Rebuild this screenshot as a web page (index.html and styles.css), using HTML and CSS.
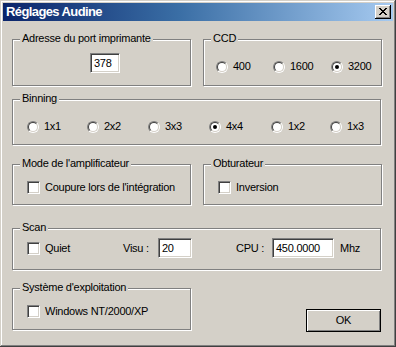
FILE: index.html
```html
<!DOCTYPE html>
<html lang="fr">
<head>
<meta charset="utf-8">
<title>Réglages Audine</title>
<link rel="stylesheet" href="styles.css">
</head>
<body>
<div class="dialog">
  <div class="titlebar">
    <span class="title">Réglages Audine</span>
    <span class="close"><svg width="8" height="7" viewBox="0 0 8 7"><path d="M0 0h2v1H0zM6 0h2v1H6zM1 1h2v1H1zM5 1h2v1H5zM2 2h4v1H2zM3 3h2v1H3zM2 4h4v1H2zM1 5h2v1H1zM5 5h2v1H5zM0 6h2v1H0zM6 6h2v1H6z" fill="#000"/></svg></span>
  </div>
  <div class="content">
    <div class="row row1">
      <div class="group half addr">
        <span class="legend">Adresse du port imprimante</span>
        <span class="field f-addr">378</span>
      </div>
      <div class="group half ccd">
        <span class="legend">CCD</span>
        <div class="opts ccd-opts">
          <span class="opt"><span class="radio"></span>400</span>
          <span class="opt"><span class="radio"></span>1600</span>
          <span class="opt"><span class="radio checked"></span>3200</span>
        </div>
      </div>
    </div>
    <div class="group full bin">
      <span class="legend">Binning</span>
      <div class="opts bin-opts">
        <span class="opt"><span class="radio"></span>1x1</span>
        <span class="opt"><span class="radio"></span>2x2</span>
        <span class="opt"><span class="radio"></span>3x3</span>
        <span class="opt"><span class="radio checked"></span>4x4</span>
        <span class="opt"><span class="radio"></span>1x2</span>
        <span class="opt"><span class="radio"></span>1x3</span>
      </div>
    </div>
    <div class="row row3">
      <div class="group half amp">
        <span class="legend">Mode de l'amplificateur</span>
        <span class="opt"><span class="check"></span>Coupure lors de l'intégration</span>
      </div>
      <div class="group half obt">
        <span class="legend">Obturateur</span>
        <span class="opt"><span class="check"></span>Inversion</span>
      </div>
    </div>
    <div class="group full scan">
      <span class="legend">Scan</span>
      <div class="scan-row">
        <span class="opt quiet"><span class="check"></span>Quiet</span>
        <span class="lbl lbl-visu">Visu :</span>
        <span class="field f-visu">20</span>
        <span class="lbl lbl-cpu">CPU :</span>
        <span class="field f-cpu">450.0000</span>
        <span class="lbl lbl-mhz">Mhz</span>
      </div>
    </div>
    <div class="row row5">
      <div class="group half os">
        <span class="legend">Système d'exploitation</span>
        <span class="opt"><span class="check"></span>Windows NT/2000/XP</span>
      </div>
      <span class="button">OK</span>
    </div>
  </div>
</div>
</body>
</html>
```

FILE: styles.css
```css
* { box-sizing: border-box; }
html, body { margin: 0; padding: 0; background: #d4d0c8; }
body {
  font-family: "Liberation Sans", Arial, sans-serif;
  font-size: 11px;
  letter-spacing: -0.25px;
  color: #000;
}
.dialog {
  width: 396px;
  height: 347px;
  padding: 3px;
  background: #d4d0c8;
  box-shadow: inset -1px -1px 0 #404040, inset 1px 1px 0 #d4d0c8, inset -2px -2px 0 #808080, inset 2px 2px 0 #fff;
}
.titlebar {
  height: 18px;
  display: flex;
  align-items: center;
  justify-content: space-between;
  padding: 0 2px 0 3px;
  background: linear-gradient(to right, #0a246a 0%, #3a6ea5 45%, #a6caf0 100%);
}
.title {
  color: #fff;
  font-weight: bold;
  font-size: 13px;
  letter-spacing: -0.6px;
  line-height: 18px;
}
.close {
  width: 16px;
  height: 14px;
  background: #d4d0c8;
  box-shadow: inset -1px -1px 0 #000, inset 1px 1px 0 #fff, inset -2px -2px 0 #808080;
  display: flex;
  padding: 3px 0 0 4px;
}
.close svg { display: block; }
.content {
  margin: 18px 0 0 9px;
  width: 370px;
}
.row { display: flex; gap: 12px; }
.group {
  position: relative;
  border: 1px solid #808080;
  box-shadow: 1px 1px 0 #fff, inset 1px 1px 0 #fff;
}
.half { width: 179px; }
.full { width: 369px; }
.legend {
  position: absolute;
  top: -8px;
  left: 7px;
  padding: 0 2px;
  background: #d4d0c8;
  line-height: 13px;
  white-space: nowrap;
}
.row1 { height: 47px; margin-bottom: 13px; }
.row1 .group { height: 47px; }
.addr { padding: 13px 0 0 77px; }
.ccd { padding: 20px 0 0 12px; }
.bin { height: 46px; margin-bottom: 19px; padding: 20px 0 0 14px; }
.row3 { height: 41px; margin-bottom: 23px; }
.row3 .group { height: 41px; padding: 16px 0 0 14px; }
.scan { height: 42px; margin-bottom: 18px; padding: 9px 0 0 14px; }
.row5 .group { height: 42px; padding: 16px 0 0 14px; }

.opts { display: grid; }
.ccd-opts { grid-template-columns: 57px 58px auto; }
.bin-opts { grid-template-columns: 60px 61px 61px 62px 59px auto; }
.opt {
  display: flex;
  align-items: center;
  gap: 5px;
  height: 13px;
  line-height: 13px;
  white-space: nowrap;
}
.radio {
  position: relative;
  flex: none;
  width: 12px;
  height: 12px;
  border-radius: 50%;
  border: 1px solid;
  border-color: #808080 #fff #fff #808080;
}
.radio::before {
  content: "";
  position: absolute;
  inset: 0;
  border-radius: 50%;
  border: 1px solid;
  border-color: #404040 #d4d0c8 #d4d0c8 #404040;
  background: #fff;
}
.radio.checked::after {
  content: "";
  position: absolute;
  left: 3px;
  top: 3px;
  width: 4px;
  height: 4px;
  border-radius: 50%;
  background: #000;
}
.check {
  flex: none;
  width: 13px;
  height: 13px;
  background: #fff;
  border: 1px solid;
  border-color: #808080 #fff #fff #808080;
  box-shadow: inset 1px 1px 0 #404040, inset -1px -1px 0 #d4d0c8;
}
.field {
  display: flex;
  align-items: center;
  height: 20px;
  padding: 0 2px 0 3px;
  background: #fff;
  border: 1px solid;
  border-color: #808080 #fff #fff #808080;
  box-shadow: inset 1px 1px 0 #404040, inset -1px -1px 0 #d4d0c8;
  line-height: 13px;
}
.f-addr { width: 30px; }
.scan-row { display: flex; align-items: center; height: 20px; }
.quiet { width: 96px; }
.lbl { line-height: 13px; white-space: nowrap; }
.lbl-visu { width: 35px; }
.f-visu { width: 34px; }
.lbl-cpu { width: 36px; margin-left: 44px; }
.f-cpu { width: 62px; }
.lbl-mhz { margin-left: 6px; }
.row5 { align-items: flex-start; }
.button {
  margin: 21px 1px 0 auto;
  width: 75px;
  height: 23px;
  display: flex;
  align-items: center;
  justify-content: center;
  border: 1px solid #000;
  box-shadow: inset 1px 1px 0 #fff, inset -1px -1px 0 #808080;
  line-height: 13px;
}
```
